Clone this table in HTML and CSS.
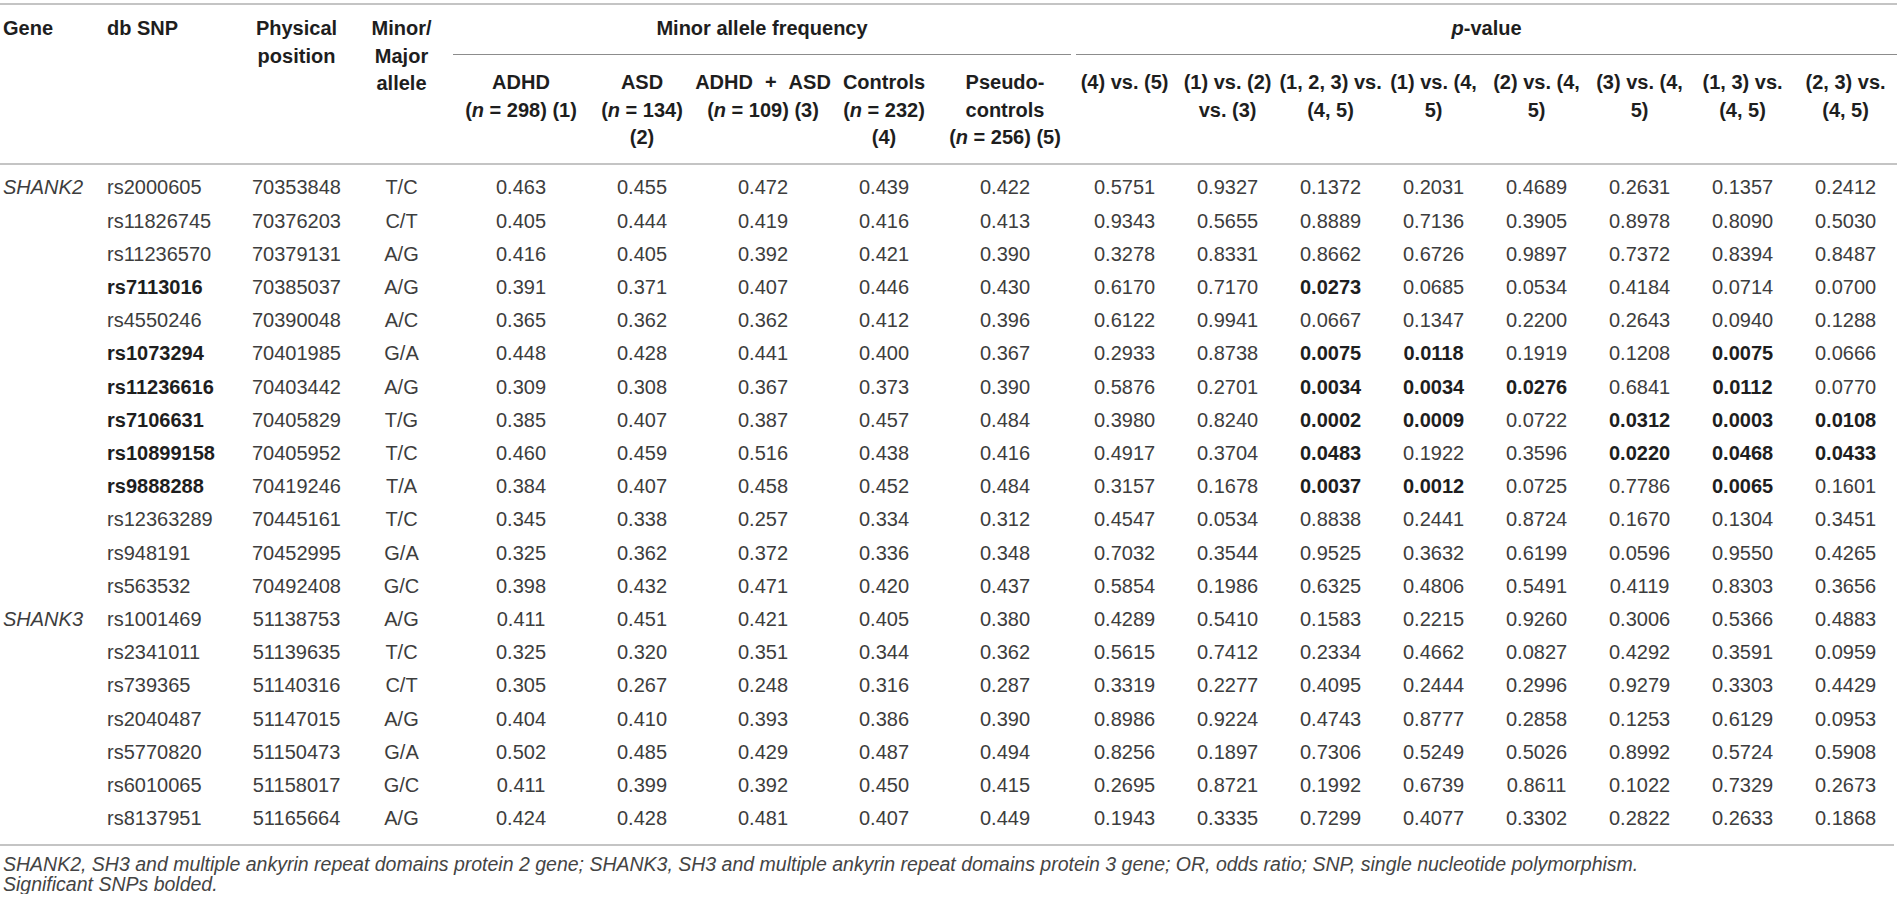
FILE: index.html
```html
<!DOCTYPE html>
<html lang="en">
<head>
  <meta charset="UTF-8" />
  <title>SHANK2 / SHANK3 SNP association</title>
  <meta name="viewport" content="width=device-width, initial-scale=1.0"/>
  <link rel="stylesheet" href="styles.css">
</head>
<body>

  <div class="page">
    <table class="snp-table">
      <colgroup>
        <col class="c-gene"><col class="c-snp"><col class="c-pos"><col class="c-allele">
        <col class="c-wide"><col class="c-narrow"><col class="c-wide"><col class="c-narrow"><col class="c-wide">
        <col class="c-p"><col class="c-p"><col class="c-p"><col class="c-p">
        <col class="c-p"><col class="c-p"><col class="c-p"><col class="c-p">
      </colgroup>

      <!-- Header -->
      <thead>
        <tr>
          <th rowspan="2" class="side left">Gene</th>
          <th rowspan="2" class="side left">db SNP</th>
          <th rowspan="2" class="side">Physical<br>position</th>
          <th rowspan="2" class="side">Minor/<br>Major<br>allele</th>
          <th colspan="5" class="group"><div class="group-title maf">Minor allele frequency</div></th>
          <th colspan="8" class="group"><div class="group-title pv"><i>p</i>-value</div></th>
        </tr>
        <tr>
          <th class="sub">ADHD<br>(<i>n</i> = 298) (1)</th>
          <th class="sub">ASD<br>(<i>n</i> = 134)<br>(2)</th>
          <th class="sub">ADHD<span class="plus">+</span>ASD<br>(<i>n</i> = 109) (3)</th>
          <th class="sub">Controls<br>(<i>n</i> = 232)<br>(4)</th>
          <th class="sub">Pseudo-<br>controls<br>(<i>n</i> = 256) (5)</th>
          <th class="sub">(4) vs. (5)</th>
          <th class="sub">(1) vs. (2)<br>vs. (3)</th>
          <th class="sub">(1, 2, 3) vs.<br>(4, 5)</th>
          <th class="sub">(1) vs. (4,<br>5)</th>
          <th class="sub">(2) vs. (4,<br>5)</th>
          <th class="sub">(3) vs. (4,<br>5)</th>
          <th class="sub">(1, 3) vs.<br>(4, 5)</th>
          <th class="sub">(2, 3) vs.<br>(4, 5)</th>
        </tr>
      </thead>

      <!-- Rows -->
      <tbody>
        <tr><td class="gene">SHANK2</td><td class="snp">rs2000605</td><td>70353848</td><td>T/C</td><td>0.463</td><td>0.455</td><td>0.472</td><td>0.439</td><td>0.422</td><td>0.5751</td><td>0.9327</td><td>0.1372</td><td>0.2031</td><td>0.4689</td><td>0.2631</td><td>0.1357</td><td>0.2412</td></tr>
        <tr><td class="gene"></td><td class="snp">rs11826745</td><td>70376203</td><td>C/T</td><td>0.405</td><td>0.444</td><td>0.419</td><td>0.416</td><td>0.413</td><td>0.9343</td><td>0.5655</td><td>0.8889</td><td>0.7136</td><td>0.3905</td><td>0.8978</td><td>0.8090</td><td>0.5030</td></tr>
        <tr><td class="gene"></td><td class="snp">rs11236570</td><td>70379131</td><td>A/G</td><td>0.416</td><td>0.405</td><td>0.392</td><td>0.421</td><td>0.390</td><td>0.3278</td><td>0.8331</td><td>0.8662</td><td>0.6726</td><td>0.9897</td><td>0.7372</td><td>0.8394</td><td>0.8487</td></tr>
        <tr><td class="gene"></td><td class="snp sig">rs7113016</td><td>70385037</td><td>A/G</td><td>0.391</td><td>0.371</td><td>0.407</td><td>0.446</td><td>0.430</td><td>0.6170</td><td>0.7170</td><td class="sig">0.0273</td><td>0.0685</td><td>0.0534</td><td>0.4184</td><td>0.0714</td><td>0.0700</td></tr>
        <tr><td class="gene"></td><td class="snp">rs4550246</td><td>70390048</td><td>A/C</td><td>0.365</td><td>0.362</td><td>0.362</td><td>0.412</td><td>0.396</td><td>0.6122</td><td>0.9941</td><td>0.0667</td><td>0.1347</td><td>0.2200</td><td>0.2643</td><td>0.0940</td><td>0.1288</td></tr>
        <tr><td class="gene"></td><td class="snp sig">rs1073294</td><td>70401985</td><td>G/A</td><td>0.448</td><td>0.428</td><td>0.441</td><td>0.400</td><td>0.367</td><td>0.2933</td><td>0.8738</td><td class="sig">0.0075</td><td class="sig">0.0118</td><td>0.1919</td><td>0.1208</td><td class="sig">0.0075</td><td>0.0666</td></tr>
        <tr><td class="gene"></td><td class="snp sig">rs11236616</td><td>70403442</td><td>A/G</td><td>0.309</td><td>0.308</td><td>0.367</td><td>0.373</td><td>0.390</td><td>0.5876</td><td>0.2701</td><td class="sig">0.0034</td><td class="sig">0.0034</td><td class="sig">0.0276</td><td>0.6841</td><td class="sig">0.0112</td><td>0.0770</td></tr>
        <tr><td class="gene"></td><td class="snp sig">rs7106631</td><td>70405829</td><td>T/G</td><td>0.385</td><td>0.407</td><td>0.387</td><td>0.457</td><td>0.484</td><td>0.3980</td><td>0.8240</td><td class="sig">0.0002</td><td class="sig">0.0009</td><td>0.0722</td><td class="sig">0.0312</td><td class="sig">0.0003</td><td class="sig">0.0108</td></tr>
        <tr><td class="gene"></td><td class="snp sig">rs10899158</td><td>70405952</td><td>T/C</td><td>0.460</td><td>0.459</td><td>0.516</td><td>0.438</td><td>0.416</td><td>0.4917</td><td>0.3704</td><td class="sig">0.0483</td><td>0.1922</td><td>0.3596</td><td class="sig">0.0220</td><td class="sig">0.0468</td><td class="sig">0.0433</td></tr>
        <tr><td class="gene"></td><td class="snp sig">rs9888288</td><td>70419246</td><td>T/A</td><td>0.384</td><td>0.407</td><td>0.458</td><td>0.452</td><td>0.484</td><td>0.3157</td><td>0.1678</td><td class="sig">0.0037</td><td class="sig">0.0012</td><td>0.0725</td><td>0.7786</td><td class="sig">0.0065</td><td>0.1601</td></tr>
        <tr><td class="gene"></td><td class="snp">rs12363289</td><td>70445161</td><td>T/C</td><td>0.345</td><td>0.338</td><td>0.257</td><td>0.334</td><td>0.312</td><td>0.4547</td><td>0.0534</td><td>0.8838</td><td>0.2441</td><td>0.8724</td><td>0.1670</td><td>0.1304</td><td>0.3451</td></tr>
        <tr><td class="gene"></td><td class="snp">rs948191</td><td>70452995</td><td>G/A</td><td>0.325</td><td>0.362</td><td>0.372</td><td>0.336</td><td>0.348</td><td>0.7032</td><td>0.3544</td><td>0.9525</td><td>0.3632</td><td>0.6199</td><td>0.0596</td><td>0.9550</td><td>0.4265</td></tr>
        <tr><td class="gene"></td><td class="snp">rs563532</td><td>70492408</td><td>G/C</td><td>0.398</td><td>0.432</td><td>0.471</td><td>0.420</td><td>0.437</td><td>0.5854</td><td>0.1986</td><td>0.6325</td><td>0.4806</td><td>0.5491</td><td>0.4119</td><td>0.8303</td><td>0.3656</td></tr>
        <tr><td class="gene">SHANK3</td><td class="snp">rs1001469</td><td>51138753</td><td>A/G</td><td>0.411</td><td>0.451</td><td>0.421</td><td>0.405</td><td>0.380</td><td>0.4289</td><td>0.5410</td><td>0.1583</td><td>0.2215</td><td>0.9260</td><td>0.3006</td><td>0.5366</td><td>0.4883</td></tr>
        <tr><td class="gene"></td><td class="snp">rs2341011</td><td>51139635</td><td>T/C</td><td>0.325</td><td>0.320</td><td>0.351</td><td>0.344</td><td>0.362</td><td>0.5615</td><td>0.7412</td><td>0.2334</td><td>0.4662</td><td>0.0827</td><td>0.4292</td><td>0.3591</td><td>0.0959</td></tr>
        <tr><td class="gene"></td><td class="snp">rs739365</td><td>51140316</td><td>C/T</td><td>0.305</td><td>0.267</td><td>0.248</td><td>0.316</td><td>0.287</td><td>0.3319</td><td>0.2277</td><td>0.4095</td><td>0.2444</td><td>0.2996</td><td>0.9279</td><td>0.3303</td><td>0.4429</td></tr>
        <tr><td class="gene"></td><td class="snp">rs2040487</td><td>51147015</td><td>A/G</td><td>0.404</td><td>0.410</td><td>0.393</td><td>0.386</td><td>0.390</td><td>0.8986</td><td>0.9224</td><td>0.4743</td><td>0.8777</td><td>0.2858</td><td>0.1253</td><td>0.6129</td><td>0.0953</td></tr>
        <tr><td class="gene"></td><td class="snp">rs5770820</td><td>51150473</td><td>G/A</td><td>0.502</td><td>0.485</td><td>0.429</td><td>0.487</td><td>0.494</td><td>0.8256</td><td>0.1897</td><td>0.7306</td><td>0.5249</td><td>0.5026</td><td>0.8992</td><td>0.5724</td><td>0.5908</td></tr>
        <tr><td class="gene"></td><td class="snp">rs6010065</td><td>51158017</td><td>G/C</td><td>0.411</td><td>0.399</td><td>0.392</td><td>0.450</td><td>0.415</td><td>0.2695</td><td>0.8721</td><td>0.1992</td><td>0.6739</td><td>0.8611</td><td>0.1022</td><td>0.7329</td><td>0.2673</td></tr>
        <tr><td class="gene"></td><td class="snp">rs8137951</td><td>51165664</td><td>A/G</td><td>0.424</td><td>0.428</td><td>0.481</td><td>0.407</td><td>0.449</td><td>0.1943</td><td>0.3335</td><td>0.7299</td><td>0.4077</td><td>0.3302</td><td>0.2822</td><td>0.2633</td><td>0.1868</td></tr>
      </tbody>
    </table>

    <!-- Footnote -->
    <div class="notes">
      <p><i>SHANK2, SH3 and multiple ankyrin repeat domains protein 2 gene; SHANK3, SH3 and multiple ankyrin repeat domains protein 3 gene; OR, odds ratio; SNP, single nucleotide polymorphism.</i></p>
      <p><i>Significant SNPs bolded.</i></p>
    </div>
  </div>

</body>
</html>
```

FILE: styles.css
```css
* {
  box-sizing: border-box;
  margin: 0;
  padding: 0;
}

body {
  background: #fff;
  color: #3d3d3d;
  font-family: 'Liberation Sans', Arial, sans-serif;
  font-size: 20px;
}

.page {
  padding-top: 3px;
  width: 1894px;
}

.snp-table {
  width: 1894px;
  table-layout: fixed;
  border-collapse: separate;
  border-spacing: 0;
}

.c-gene { width: 103px; }
.c-snp { width: 140px; }
.c-pos { width: 107px; }
.c-allele { width: 103px; }
.c-wide { width: 136px; }
.c-narrow { width: 106px; }
.c-p { width: 103px; }

/* header */
th {
  font-weight: bold;
  color: #1e1e1e;
  white-space: nowrap;
  line-height: 27.5px;
  vertical-align: top;
  text-align: center;
}

th.side {
  border-top: 2px solid #c4c4c4;
  border-bottom: 2px solid #c4c4c4;
  padding: 10px 4px 0;
}

th.left {
  text-align: left;
}

th.side:first-child {
  padding-left: 3px;
}

th.group {
  border-top: 2px solid #c4c4c4;
  padding: 0;
}

.group-title {
  padding: 10px 0 12px;
  line-height: 27px;
  border-bottom: 1px solid #8c8c8c;
}

.group-title.maf {
  margin-right: 2px;
}

.group-title.pv {
  margin-left: 3px;
}

th.sub {
  padding: 14px 0 11.5px;
  border-bottom: 2px solid #c4c4c4;
}

.plus {
  margin: 0 12px;
}

/* body */
td {
  text-align: center;
  line-height: 23.2px;
  padding: 5px 4px;
  white-space: nowrap;
  vertical-align: middle;
}

td.gene {
  text-align: left;
  font-style: italic;
  padding-left: 3px;
}

td.snp {
  text-align: left;
}

td.sig {
  font-weight: bold;
  color: #1e1e1e;
}

tbody tr:first-child td {
  padding-top: 11.4px;
}

tbody tr:last-child td {
  padding-bottom: 13.4px;
}

/* footnote */
.notes {
  border-top: 2px solid #c4c4c4;
  padding: 8px 0 0 3px;
  font-size: 19.5px;
  line-height: 20px;
  color: #444;
}
```
